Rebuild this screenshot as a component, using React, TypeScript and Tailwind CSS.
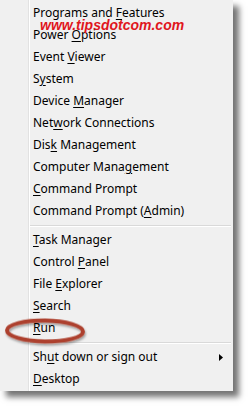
import type { ReactNode } from "react";

type Item = { pre: string; key: string; post: string; arrow?: boolean };

const groups: Item[][] = [
  [
    { pre: "Programs and ", key: "F", post: "eatures" },
    { pre: "Power ", key: "O", post: "ptions" },
    { pre: "Event ", key: "V", post: "iewer" },
    { pre: "S", key: "y", post: "stem" },
    { pre: "Device ", key: "M", post: "anager" },
    { pre: "Net", key: "w", post: "ork Connections" },
    { pre: "Dis", key: "k", post: " Management" },
    { pre: "Computer Mana", key: "g", post: "ement" },
    { pre: "", key: "C", post: "ommand Prompt" },
    { pre: "Command Prompt (", key: "A", post: "dmin)" },
  ],
  [
    { pre: "", key: "T", post: "ask Manager" },
    { pre: "Control ", key: "P", post: "anel" },
    { pre: "File ", key: "E", post: "xplorer" },
    { pre: "", key: "S", post: "earch" },
    { pre: "", key: "R", post: "un" },
  ],
  [
    { pre: "Sh", key: "u", post: "t down or sign out", arrow: true },
    { pre: "", key: "D", post: "esktop" },
  ],
];

function Row({ item }: { item: Item }) {
  return (
    <div className="flex h-[22px] items-center pl-[3px] pr-[9px]">
      <span className="flex-1 whitespace-nowrap">
        {item.pre}
        <u className="underline-offset-[2px]">{item.key}</u>
        {item.post}
      </span>
      {item.arrow && (
        <svg width="4" height="7" viewBox="0 0 4 7" className="mr-[1px]">
          <path d="M0 0 L4 3.5 L0 7 Z" fill="#000" />
        </svg>
      )}
    </div>
  );
}

function Separator() {
  return (
    <div className="mb-[2px] mr-[2px] mt-[3px] h-[2px] border-t border-[#d9d9d9] bg-white" />
  );
}

function Menu({ children }: { children: ReactNode }) {
  return (
    <div className="flex w-[233px] bg-[#f0f0f0] shadow-[6px_6px_6px_rgba(0,0,0,0.55)]">
      <div className="w-[29px] shrink-0 border-r border-[#e2e2e2]" />
      <div className="flex-1 border-l border-white pb-[1px] pt-[2px]">{children}</div>
    </div>
  );
}

export default function App() {
  return (
    <div
      className="relative h-[406px] w-[249px] overflow-hidden bg-white text-[12px] text-black"
      style={{ fontFamily: '"Noto Sans", "Open Sans", sans-serif' }}
    >
      <Menu>
        {groups.map((g, gi) => (
          <div key={gi}>
            {gi > 0 && <Separator />}
            {g.map((item) => (
              <Row key={item.pre + item.key + item.post} item={item} />
            ))}
          </div>
        ))}
      </Menu>

      {/* watermark */}
      <div
        className="absolute left-[40px] top-[17px] text-[14px] font-bold italic leading-[16px] text-[#e0161d]"
        style={{ fontFamily: '"Liberation Sans", Arial, sans-serif' }}
      >
        www.tipsdotcom.com
      </div>

      {/* highlight ring around Run */}
      <svg
        className="absolute left-[3px] top-[315px]"
        width="90"
        height="34"
        viewBox="0 0 90 34"
      >
        <defs>
          <filter id="ring-shadow" x="-20%" y="-40%" width="140%" height="180%">
            <feDropShadow dx="1" dy="2" stdDeviation="1.2" floodColor="#000" floodOpacity="0.35" />
          </filter>
        </defs>
        <ellipse
          cx="42"
          cy="16"
          rx="38"
          ry="10.5"
          fill="none"
          stroke="#ad412d"
          strokeWidth="4"
          filter="url(#ring-shadow)"
          transform="rotate(1 42 16)"
        />
      </svg>
    </div>
  );
}
